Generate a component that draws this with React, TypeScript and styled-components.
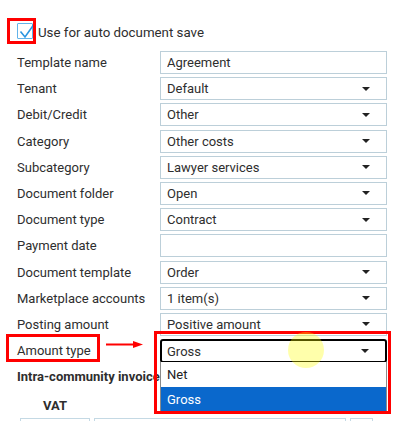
import React from "react";
import styled, { createGlobalStyle } from "styled-components";

const Global = createGlobalStyle`
  html, body { margin: 0; padding: 0; background: #fff; }
  body {
    font-family: Roboto, "Noto Sans", Arial, sans-serif;
    font-size: 13px;
    color: #2e2e2e;
    overflow: hidden;
  }
`;

const Page = styled.div`
  position: relative;
  width: 394px;
  height: 421px;
  overflow: hidden;
  box-sizing: border-box;
  padding: 23px 7px 0 17px;
`;

const CheckRow = styled.label`
  display: flex;
  align-items: center;
  gap: 5px;
  height: 16px;
  color: #2e2e2e;
  line-height: 16px;
`;

const CheckText = styled.span`
  padding-top: 3px;
  font-size: 13.3px;
`;

const CheckBox = styled.span`
  position: relative;
  width: 16px;
  height: 16px;
  box-sizing: border-box;
  border: 1px solid #62b3ea;
  border-radius: 1px;
  background: #fff;
  svg { position: absolute; left: 0; top: -2px; overflow: visible; }
`;

const Form = styled.div`
  display: grid;
  grid-template-columns: 143px 227px;
  grid-auto-rows: 23px;
  row-gap: 3.2px;
  margin-top: 12px;
`;

const Label = styled.div`
  display: flex;
  align-items: center;
  white-space: nowrap;
  color: #2e2e2e;
`;

const Field = styled.div<{ $focused?: boolean }>`
  position: relative;
  display: flex;
  align-items: center;
  box-sizing: border-box;
  padding: 0 16px 0 ${(p) => (p.$focused ? 5 : 6)}px;
  border: ${(p) => (p.$focused ? "2px solid #000" : "1px solid #bccfd9")};
  border-radius: ${(p) => (p.$focused ? "3px" : "0")};
  height: ${(p) => (p.$focused ? "24px" : "23px")};
  background: #fff;
  color: #2e2e2e;
  white-space: nowrap;
`;

const Value = styled.span`
  flex: 1;
  overflow: hidden;
`;

const Caret = styled.span`
  width: 0;
  height: 0;
  border-left: 4px solid transparent;
  border-right: 4px solid transparent;
  border-top: 4px solid #222;
`;

const Menu = styled.ul`
  position: absolute;
  left: -2px;
  right: -2px;
  top: 100%;
  margin: 1px 0 0;
  padding: 0;
  list-style: none;
  background: #fff;
  border-left: 1px solid #8a8a8a;
  border-right: 1px solid #8a8a8a;
  z-index: 2;
`;

const MenuItem = styled.li<{ $active?: boolean }>`
  height: ${(p) => (p.$active ? 24 : 25)}px;
  display: flex;
  align-items: center;
  padding-left: 6px;
  background: ${(p) => (p.$active ? "#0a68cc" : "#fff")};
  color: ${(p) => (p.$active ? "#fff" : "#222")};
`;

const Heading = styled.div`
  margin-top: 7px;
  font-weight: bold;
  line-height: 16px;
  color: #2e2e2e;
  white-space: nowrap;
`;

const SubHeading = styled.div`
  margin-top: 13px;
  padding-left: 26px;
  font-weight: bold;
  line-height: 16px;
  color: #2e2e2e;
`;

const BoxRow = styled.div`
  display: flex;
  gap: 4px;
  margin-top: 4px;
  margin-left: 3px;
`;

const Box = styled.div<{ $w: number }>`
  width: ${(p) => p.$w}px;
  height: 22px;
  box-sizing: border-box;
  border: 1px solid #c4d9e4;
  flex: none;
`;

const Frame = styled.div<{ $l: number; $t: number; $w: number; $h: number }>`
  position: absolute;
  left: ${(p) => p.$l}px;
  top: ${(p) => p.$t}px;
  width: ${(p) => p.$w}px;
  height: ${(p) => p.$h}px;
  box-sizing: border-box;
  border: 3px solid #f00;
  z-index: 3;
  pointer-events: none;
`;

const Arrow = styled.svg`
  position: absolute;
  left: 105px;
  top: 340px;
  z-index: 3;
`;

const Cursor = styled.div`
  position: absolute;
  left: 288px;
  top: 332px;
  width: 36px;
  height: 36px;
  border-radius: 50%;
  background: rgba(255, 255, 0, 0.33);
  z-index: 4;
`;

type Row = { label: string; value: string; select?: boolean };

const rows: Row[] = [
  { label: "Template name", value: "Agreement" },
  { label: "Tenant", value: "Default", select: true },
  { label: "Debit/Credit", value: "Other", select: true },
  { label: "Category", value: "Other costs", select: true },
  { label: "Subcategory", value: "Lawyer services", select: true },
  { label: "Document folder", value: "Open", select: true },
  { label: "Document type", value: "Contract", select: true },
  { label: "Payment date", value: "" },
  { label: "Document template", value: "Order", select: true },
  { label: "Marketplace accounts", value: "1 item(s)", select: true },
  { label: "Posting amount", value: "Positive amount", select: true },
];

export default function App() {
  return (
    <>
      <Global />
      <Page>
        <CheckRow>
          <CheckBox>
            <svg width="16" height="16" viewBox="0 0 16 16">
              <path d="M2.5 9.5 L7 15 L15.5 3" fill="none" stroke="#2b95e0" strokeWidth="1.6" />
            </svg>
          </CheckBox>
          <CheckText>Use for auto document save</CheckText>
        </CheckRow>

        <Form>
          {rows.map((r) => (
            <React.Fragment key={r.label}>
              <Label>{r.label}</Label>
              <Field>
                <Value>{r.value}</Value>
                {r.select && <Caret />}
              </Field>
            </React.Fragment>
          ))}
          <Label>Amount type</Label>
          <Field $focused>
            <Value>Gross</Value>
            <Caret />
            <Menu>
              <MenuItem>Net</MenuItem>
              <MenuItem $active>Gross</MenuItem>
            </Menu>
          </Field>
        </Form>

        <Heading>Intra-community invoice</Heading>
        <SubHeading>VAT</SubHeading>
        <BoxRow>
          <Box $w={70} />
          <Box $w={252} />
          <Box $w={23} />
        </BoxRow>

        <Frame $l={7} $t={18} $w={29} $h={26} />
        <Frame $l={6} $t={334} $w={94} $h={28} />
        <Frame $l={154} $t={331} $w={237} $h={83} />
        <Arrow width="38" height="9" viewBox="0 0 38 9">
          <line x1="1" y1="4.5" x2="30" y2="4.5" stroke="#f00" strokeWidth="2" />
          <polygon points="28,1 38,4.5 28,8" fill="#f00" />
        </Arrow>
        <Cursor />
      </Page>
    </>
  );
}
